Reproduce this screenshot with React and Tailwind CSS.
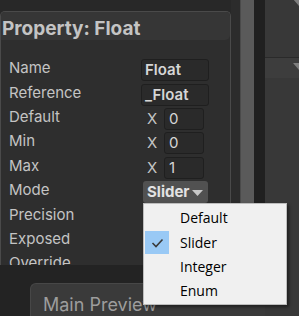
import React from "react";

const Row = ({ label, children }) => (
  <div className="flex items-center h-[24.4px] shrink-0">
    <div className="w-[132px] shrink-0 -mt-[4px] text-[15px] leading-[20px] text-[#c4c4c4]">{label}</div>
    {children}
  </div>
);

const TextField = ({ value }) => (
  <div className="w-[68px] h-[22px] rounded-[3px] bg-[#2a2a2a] border border-[#1f1f1f] pl-[3px] flex items-center text-[15px] font-semibold text-[#d6d6d6] leading-[20px]">
    {value}
  </div>
);

const XField = ({ value }) => (
  <div className="flex items-center">
    <span className="w-[23px] pl-[6px] text-[15px] leading-[20px] text-[#c4c4c4]">X</span>
    <div className="w-[40px] h-[22px] rounded-[3px] bg-[#2a2a2a] border border-[#1f1f1f] pl-[4px] flex items-center text-[15px] text-[#d6d6d6] leading-[20px]">
      {value}
    </div>
  </div>
);

export default function App() {
  return (
    <div className="relative w-[299px] h-[316px] overflow-hidden bg-[#232323] flex font-['Inter',sans-serif]">
      <div className="w-[265px] shrink-0 flex flex-col">
        <div className="h-[265px] shrink-0 flex bg-[#282828]">
          <div className="w-[231px] shrink-0 pt-[11px] flex flex-col">
            <div className="flex-1 flex flex-col border border-b-0 border-[#4a4a4a] rounded-t-[5px] bg-[#2e2e2e] overflow-hidden">
              <div className="h-[28px] shrink-0 bg-[#363636] rounded-br-[5px] pt-[5px] pl-[1px] text-[19px] leading-[24px] font-bold text-[#c4c4c4] whitespace-nowrap">
                Property: Float
              </div>
              <div className="pt-[18px] pl-[8px] flex flex-col">
                <Row label="Name"><TextField value="Float" /></Row>
                <Row label="Reference"><TextField value="_Float" /></Row>
                <Row label="Default"><XField value="0" /></Row>
                <Row label="Min"><XField value="0" /></Row>
                <Row label="Max"><XField value="1" /></Row>
                <Row label="Mode">
                  <div className="ml-[2px] w-[65px] h-[22px] rounded-[3px] bg-[#515151] pl-[4px] flex items-center text-[15px] font-bold text-[#e2e2e2] leading-[20px]">
                    <span>Slider</span>
                    <svg width="11" height="6" viewBox="0 0 11 6" className="ml-[3px] mt-[1px]">
                      <path d="M0 0 H11 L5.5 6 Z" fill="#c8c8c8" />
                    </svg>
                  </div>
                </Row>
                <Row label="Precision" />
                <Row label="Exposed" />
                <Row label="Override" />
              </div>
            </div>
          </div>
          <div className="w-[9px] shrink-0 bg-[#2c2c2c]" />
          <div className="w-[14px] shrink-0 bg-[#5a5a5a] border-l border-[#4a4a4a]" />
          <div className="w-[11px] shrink-0 bg-[#202020]" />
        </div>
        <div className="flex-1 pt-[18px] pl-[30px]">
          <div className="h-full bg-[#3a3a3a] rounded-tl-[6px] border-t border-l border-[#474747] pl-[12px] pt-[11px] text-[18px] leading-[20px] text-[#9d9d9d] whitespace-nowrap">
            Main Preview
          </div>
        </div>
      </div>
      <div className="flex-1 flex flex-col bg-[#383838]">
        <div className="h-[57px] shrink-0 flex justify-end items-start">
          <svg width="12" height="7" viewBox="0 0 12 7" className="-mr-[6px] -mt-[1px]">
            <path d="M0 0 H12 L6 7 Z" fill="#7e7e7e" />
          </svg>
        </div>
        <div className="h-[1px] shrink-0 bg-[#2a2a2a]" />
        <div className="h-[20px] shrink-0 bg-[#3d3d3d] flex justify-end items-start pt-[5px]">
          <svg width="12" height="7" viewBox="0 0 12 7" className="-mr-[6px]">
            <path d="M0 0 H12 L6 7 Z" fill="#7e7e7e" />
          </svg>
        </div>
        <div className="flex-1" />
      </div>

      <div className="absolute left-[143px] top-[203px] w-[144px] h-[102px] bg-[#f0f0f0] border border-[#bdbdbd] shadow-[2px_2px_3px_rgba(0,0,0,0.45)] pt-[2px] font-['Open_Sans',sans-serif] text-[14px] text-black">
        {["Default", "Slider", "Integer", "Enum"].map((item) => (
          <div key={item} className="flex items-center h-[24.4px]">
            <div className="w-[36px] h-full shrink-0 flex items-center">
              {item === "Slider" && (
                <div className="ml-[1px] w-[24px] h-[23px] bg-[#99c9f5] flex items-center justify-center">
                  <svg width="13" height="10" viewBox="0 0 13 10">
                    <path d="M1.5 5 L5 8.5 L11.5 1.5" fill="none" stroke="#3a3a3a" strokeWidth="1.6" />
                  </svg>
                </div>
              )}
            </div>
            <span className="leading-[20px]">{item}</span>
          </div>
        ))}
      </div>
    </div>
  );
}
